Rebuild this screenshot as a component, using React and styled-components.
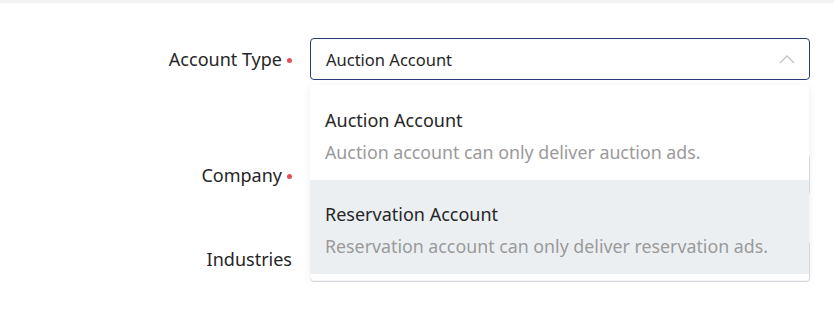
import React, { useState } from 'react'
import styled, { createGlobalStyle } from 'styled-components'

const GlobalStyle = createGlobalStyle`
    html, body {
        margin: 0;
        padding: 0;
        background: #fff;
    }
    body {
        font-family: "Noto Sans", "Liberation Sans", sans-serif;
        color: #262626;
    }
`

const TopBar = styled.div`
    height: 3px;
    background: #f2f2f2;
`

const Form = styled.div`
    width: 810px;
    display: flex;
    flex-direction: column;
`

const Row = styled.div`
    display: grid;
    grid-template-columns: 292px 500px;
    column-gap: 18px;
    align-items: center;
    margin-top: ${props => props.gap}px;
`

const Label = styled.label`
    display: flex;
    justify-content: flex-end;
    align-items: center;
    font-size: 18px;
    color: #262626;
    white-space: nowrap;
    margin-top: ${props => props.shift || 0}px;
`

const Dot = styled.span`
    width: 5px;
    height: 5px;
    border-radius: 50%;
    background: #e0505a;
    margin: 2px 0 0 5px;
`

const Field = styled.div`
    position: relative;
`

const Select = styled.div`
    height: 42px;
    box-sizing: border-box;
    border: 1px solid ${props => props.open ? '#2d3a78' : '#dcdfe6'};
    border-radius: 4px;
    display: flex;
    align-items: center;
    justify-content: space-between;
    padding: 0 14px 0 15px;
    font-size: 16.5px;
    color: #262626;
    background: #fff;
`

const Input = styled.div`
    height: 42px;
    box-sizing: border-box;
    border: 1px solid #dcdfe6;
    border-radius: 4px;
    background: #fff;
`

const Menu = styled.ul`
    position: absolute;
    top: 47px;
    left: 0;
    width: 499px;
    margin: 0;
    padding: 1px 0 6px;
    list-style: none;
    background: #fff;
    border-radius: 4px;
    box-shadow: 0 2px 8px rgba(0, 0, 0, 0.07);
    z-index: 10;
`

const Option = styled.li`
    padding: 20px 15px 14px;
    background: ${props => props.hover ? '#eceff2' : '#fff'};
    cursor: pointer;
`

const OptionTitle = styled.div`
    font-size: 18px;
    line-height: 28px;
    color: #262626;
`

const OptionDesc = styled.div`
    font-size: 17.8px;
    line-height: 28px;
    margin-top: 4px;
    color: #9a9a9a;
`

const Chevron = () => (
    <svg width="16" height="10" viewBox="0 0 16 10" fill="none">
        <path d="M1 9L8 2L15 9" stroke="#c0c4cc" strokeWidth="1.3" />
    </svg>
)

const options = [
    { title: 'Auction Account', desc: 'Auction account can only deliver auction ads.' },
    { title: 'Reservation Account', desc: 'Reservation account can only deliver reservation ads.' },
]

export default function App() {
    const [hovered, setHovered] = useState(1)

    return (
        <>
            <GlobalStyle />
            <TopBar />
            <Form>
                <Row gap={35}>
                    <Label>Account Type<Dot /></Label>
                    <Field>
                        <Select open>
                            <span>Auction Account</span>
                            <Chevron />
                        </Select>
                        <Menu>
                            {options.map((o, i) => (
                                <Option key={o.title} hover={i === hovered} onMouseEnter={() => setHovered(i)}>
                                    <OptionTitle>{o.title}</OptionTitle>
                                    <OptionDesc>{o.desc}</OptionDesc>
                                </Option>
                            ))}
                        </Menu>
                    </Field>
                </Row>
                <Row gap={74}>
                    <Label>Company<Dot /></Label>
                    <Input />
                </Row>
                <Row gap={44}>
                    <Label shift={-5}>Industries</Label>
                    <Input />
                </Row>
            </Form>
        </>
    )
}
